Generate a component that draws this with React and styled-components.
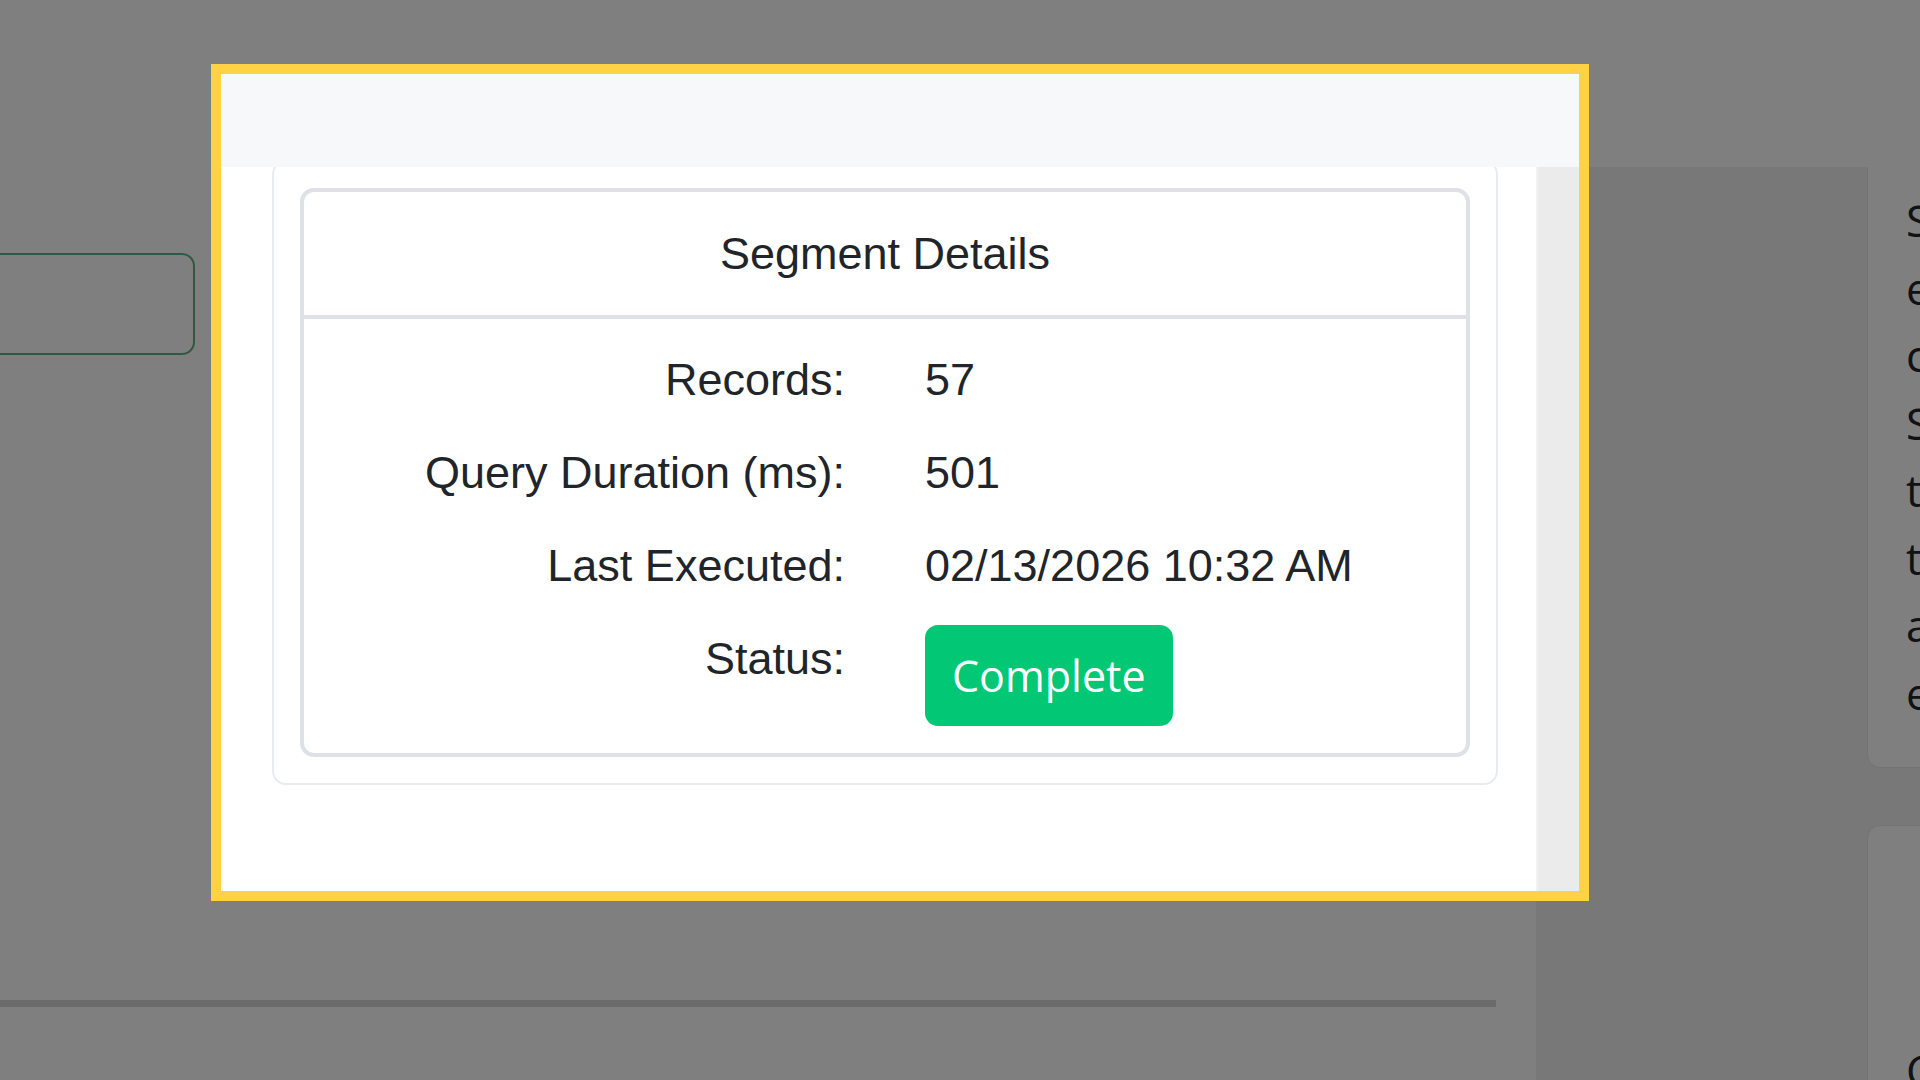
import React from "react";
import styled, { createGlobalStyle } from "styled-components";

const Global = createGlobalStyle`
  html, body {
    margin: 0;
    padding: 0;
    width: 100%;
    height: 100%;
    overflow: hidden;
    background: #ffffff;
    font-family: "Liberation Sans", Arial, sans-serif;
    color: #212529;
  }
  * { box-sizing: border-box; }
`;

const Page = styled.div`
  width: 1920px;
  height: 1080px;
  display: flex;
  flex-direction: column;
  background: #ffffff;
`;

const TopBar = styled.header`
  position: relative;
  z-index: 1;
  height: 167px;
  flex-shrink: 0;
  background: #ffffff;
`;

const PageBody = styled.div`
  flex: 1;
  display: flex;
  min-height: 0;
`;

const Main = styled.main`
  width: 1536px;
  flex-shrink: 0;
  padding-top: 86px;
  display: flex;
  flex-direction: column;
  background: #ffffff;
`;

const OutlineBox = styled.div`
  width: 235px;
  height: 102px;
  margin-left: -40px;
  border: 2.5px solid #5ab488;
  border-radius: 13px;
`;

const Rule = styled.div`
  width: 1496px;
  height: 7px;
  margin-top: 645px;
  background: #d6d6d6;
`;

const Aside = styled.aside`
  flex: 1;
  background: #f0f0f0;
  padding-left: 331px;
  display: flex;
  flex-direction: column;
  gap: 57px;
  overflow: hidden;
`;

const InfoCard = styled.div`
  background: #ffffff;
  border: 1px solid #e6e6e6;
  border-radius: 13px;
  margin-top: ${(p) => p.$offset || 0}px;
  padding: ${(p) => p.$padTop}px 38px 40px 38px;
  font-family: "Open Sans", "Liberation Sans", sans-serif;
  font-size: 44px;
  line-height: 67.5px;
  white-space: nowrap;
  color: #212529;
`;

const Overlay = styled.div`
  position: fixed;
  inset: 0;
  z-index: 10;
  background: rgba(0, 0, 0, 0.5);
`;

const Highlight = styled.div`
  position: fixed;
  z-index: 11;
  left: 211px;
  top: 64px;
  width: 1378px;
  height: 837px;
  border: 10px solid #ffd245;
  background: #ffffff;
  display: flex;
  flex-direction: column;
  overflow: hidden;
`;

const ModalHeader = styled.div`
  height: 93px;
  flex-shrink: 0;
  background: #f7f8fa;
`;

const ModalBody = styled.div`
  flex: 1;
  display: flex;
  min-height: 0;
`;

const ModalContent = styled.div`
  flex: 1;
  overflow: hidden;
  padding: 0 38px 0 51px;
  background: #ffffff;
`;

const ScrollTrack = styled.div`
  width: 43px;
  flex-shrink: 0;
  background: #ebebeb;
  border-left: 2px solid #f2f2f2;
`;

const OuterCard = styled.section`
  margin-top: -7px;
  border: 2px solid #e9ecef;
  border-radius: 14px;
  padding: 26px;
`;

const DetailsBox = styled.div`
  border: 4px solid #dee2e6;
  border-radius: 14px;
`;

const DetailsHeader = styled.div`
  padding: 28px 0;
  text-align: center;
  font-size: 45px;
  line-height: 67px;
  color: #212529;
  border-bottom: 4px solid #dee2e6;
`;

const DetailsGrid = styled.dl`
  margin: 0;
  padding: 27px 0;
  display: grid;
  grid-template-columns: 1fr 1fr;
  column-gap: 80px;
  row-gap: 26px;
  align-items: start;
  font-size: 45px;
  line-height: 67px;
  color: #212529;
`;

const Label = styled.dt`
  margin: 0;
  text-align: right;
`;

const Value = styled.dd`
  margin: 0;
  text-align: left;
  white-space: nowrap;
`;

const Badge = styled.span`
  display: inline-flex;
  align-items: center;
  height: 101px;
  padding: 0 27px;
  border-radius: 13px;
  background: #02c875;
  color: #ffffff;
  font-family: "Open Sans", "Noto Sans", sans-serif;
  font-size: 43px;
`;

const details = [
  { label: "Records:", value: "57" },
  { label: "Query Duration (ms):", value: "501" },
  { label: "Last Executed:", value: "02/13/2026 10:32 AM" },
];

export default function App() {
  return (
    <>
      <Global />
      <Page>
        <TopBar />
        <PageBody>
          <Main>
            <OutlineBox />
            <Rule />
          </Main>
          <Aside>
            <InfoCard $offset={-20} $padTop={39}>
              Segments are created
              <br />
              each time a query is
              <br />
              completed. Use the
              <br />
              Segment Details view
              <br />
              to review the records
              <br />
              that were returned
              <br />
              and when the query
              <br />
              executed last.
            </InfoCard>
            <InfoCard $padTop={211}>Created by</InfoCard>
          </Aside>
        </PageBody>
      </Page>
      <Overlay />
      <Highlight>
        <ModalHeader />
        <ModalBody>
          <ModalContent>
            <OuterCard>
              <DetailsBox>
                <DetailsHeader>Segment Details</DetailsHeader>
                <DetailsGrid>
                  {details.map((d) => (
                    <React.Fragment key={d.label}>
                      <Label>{d.label}</Label>
                      <Value>{d.value}</Value>
                    </React.Fragment>
                  ))}
                  <Label>Status:</Label>
                  <Value>
                    <Badge>Complete</Badge>
                  </Value>
                </DetailsGrid>
              </DetailsBox>
            </OuterCard>
          </ModalContent>
          <ScrollTrack />
        </ModalBody>
      </Highlight>
    </>
  );
}
